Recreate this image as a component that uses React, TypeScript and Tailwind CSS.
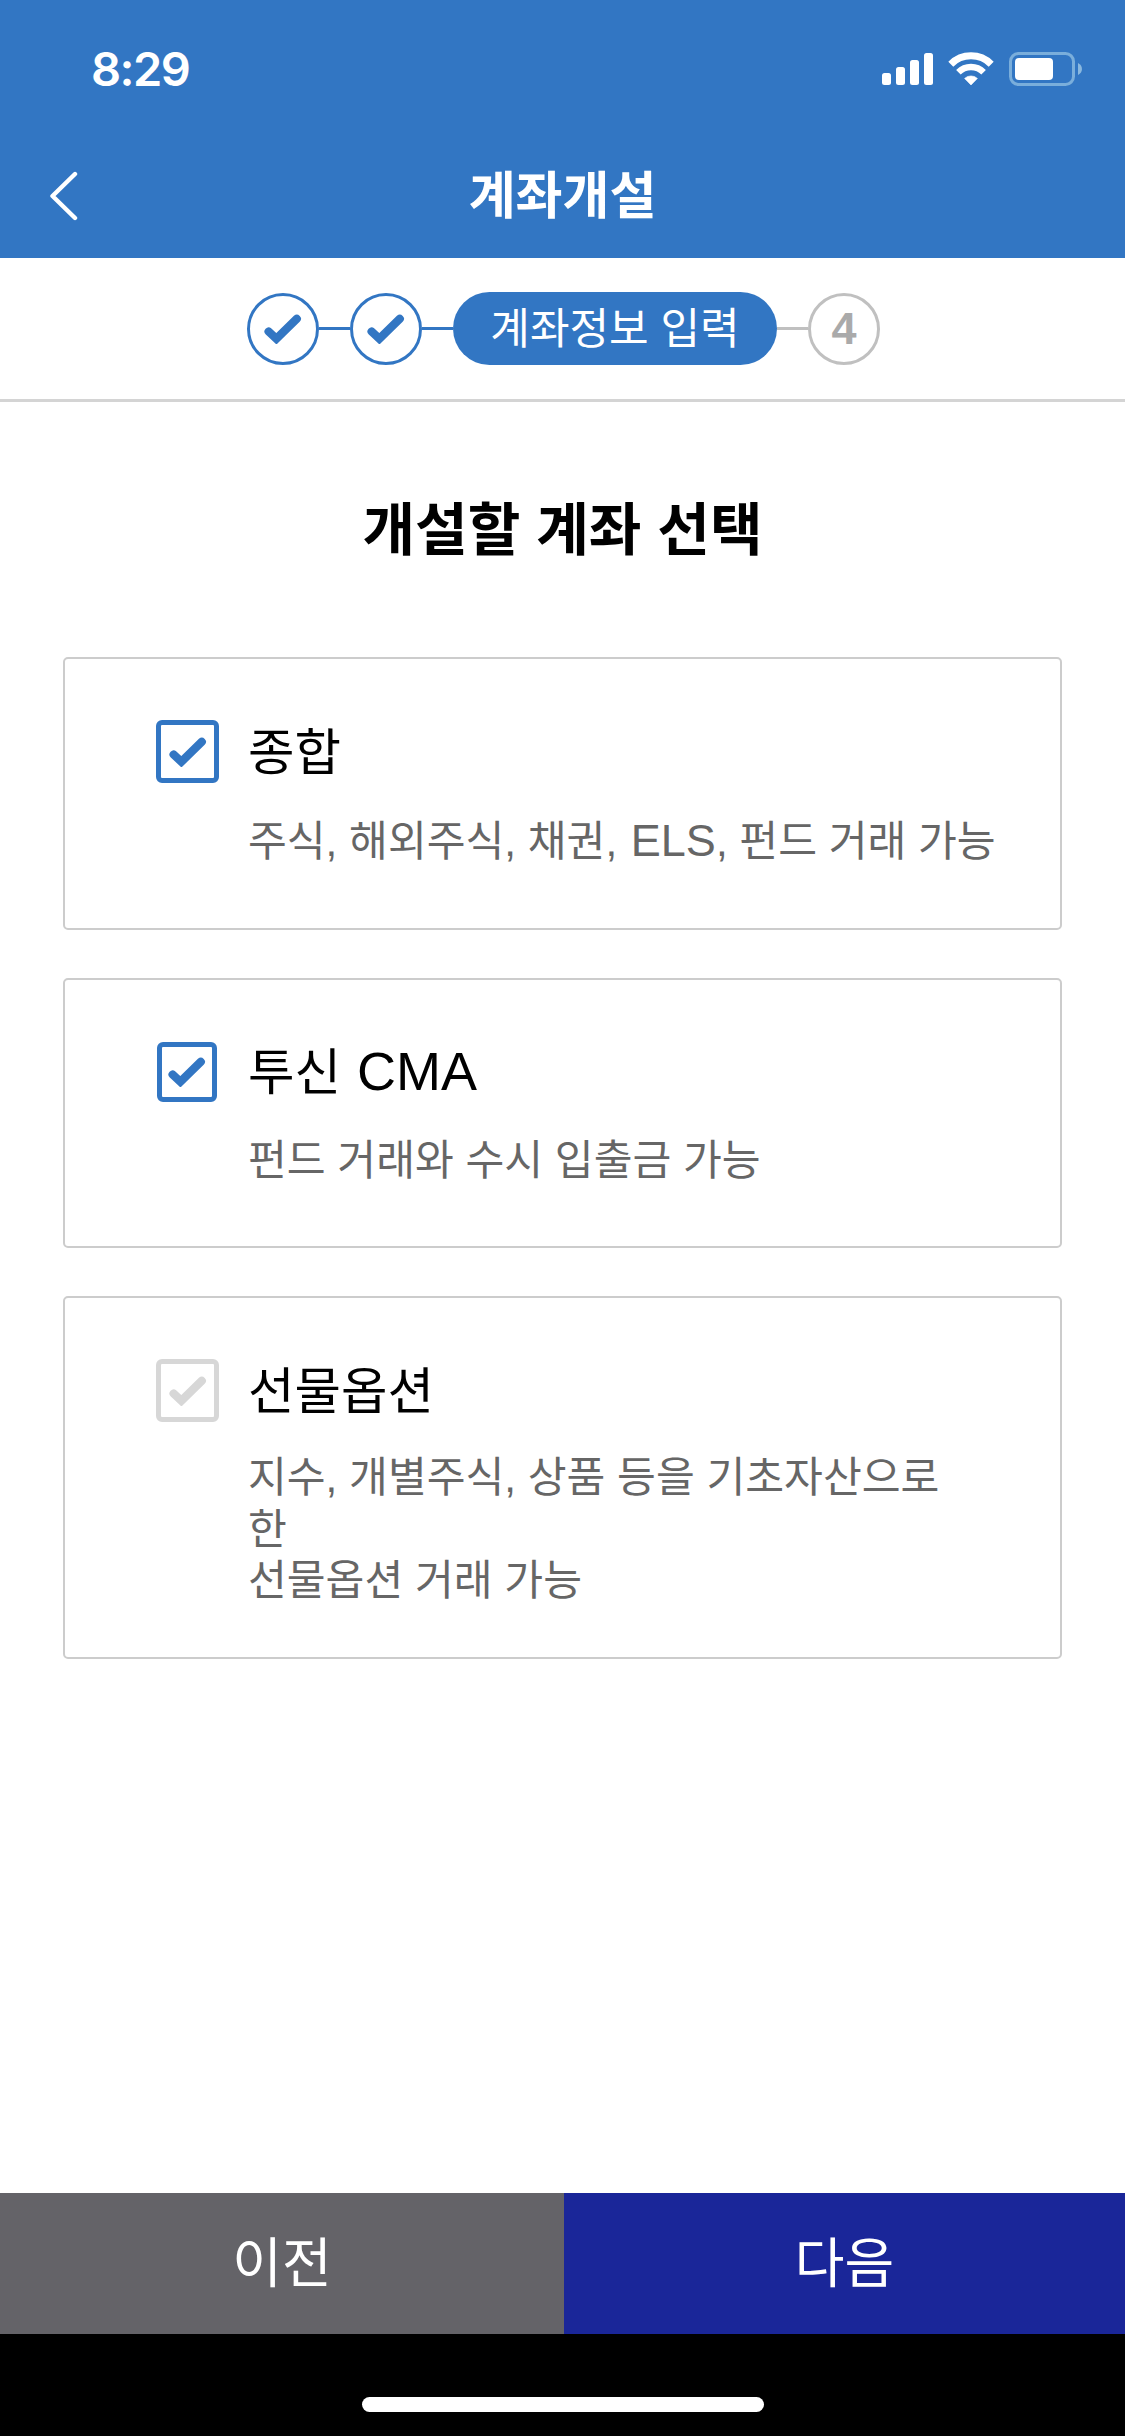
import { ReactNode } from "react";
import clsx from "clsx";

interface Account {
  id: string;
  name: ReactNode;
  desc: ReactNode;
  checked: boolean;
  cardClass: string;
  boxClass: string;
  nameClass?: string;
  descClass: string;
}

const accounts: Account[] = [
  {
    id: "general",
    name: "종합",
    desc: (
      <>
        주식, 해외주식, 채권, <span className="ml-0.5 text-[45px]">ELS</span>, 펀드 거래 가능
      </>
    ),
    checked: true,
    cardClass: "h-[273px]",
    boxClass: "size-[63px]",
    nameClass: "pt-0.5",
    descClass: "mt-[32px]",
  },
  {
    id: "cma",
    name: (
      <>
        투신 <span className="ml-0.5 text-[54px]">CMA</span>
      </>
    ),
    desc: "펀드 거래와 수시 입출금 가능",
    checked: true,
    cardClass: "h-[270px]",
    boxClass: "size-[60px] ml-px mr-0.5",
    descClass: "mt-[32px]",
  },
  {
    id: "futures",
    name: "선물옵션",
    desc: (
      <>
        지수, 개별주식, 상품 등을 기초자산으로
        <br />
        한
        <br />
        선물옵션 거래 가능
      </>
    ),
    checked: false,
    cardClass: "h-[363px]",
    boxClass: "size-[63px]",
    nameClass: "pt-0.5",
    descClass: "mt-[30px]",
  },
];

const CheckMark = ({ className }: { className?: string }) => (
  <svg viewBox="0 0 38 30" className={className} fill="none">
    <path
      d="M4.6 17.5L12.4 24.8L32.8 4.8"
      stroke="currentColor"
      strokeWidth="8.2"
      strokeLinecap="round"
    />
  </svg>
);

const StatusBar = () => (
  <div className="flex h-[135px] items-start justify-between pl-[91px] pr-[43px] pt-[52px] text-white">
    <p className="font-[Inter] text-[47px] font-semibold leading-[34px] tracking-[-1.5px]">8:29</p>
    <div className="flex items-start">
      <svg width="51" height="34" viewBox="0 0 51 34" fill="currentColor">
        <rect x="0" y="21" width="9" height="12" rx="2.5" />
        <rect x="14" y="15" width="9" height="18" rx="2.5" />
        <rect x="28" y="8" width="9" height="25" rx="2.5" />
        <rect x="42" y="1" width="9" height="32" rx="2.5" />
      </svg>
      <svg className="ml-[15px]" width="46" height="34" viewBox="0 0 46 34" fill="none">
        <path d="M2.8 12.2A28.6 28.6 0 0 1 43.2 12.2" stroke="currentColor" strokeWidth="7" />
        <path d="M10.4 20.2A17.8 17.8 0 0 1 35.6 20.2" stroke="currentColor" strokeWidth="6.4" />
        <path
          d="M23 33L16.6 26.4A9.5 9.5 0 0 1 29.4 26.4Z"
          fill="currentColor"
          stroke="currentColor"
          strokeWidth="0.6"
          strokeLinejoin="round"
        />
      </svg>
      <svg className="ml-[15px]" width="73" height="34" viewBox="0 0 73 34" fill="none">
        <rect x="1.5" y="1.5" width="63" height="31" rx="8" stroke="#7aaedb" strokeWidth="3" />
        <rect x="6" y="6" width="38" height="22" rx="4" fill="currentColor" />
        <path d="M69 11C74.3 13.5 74.3 20.5 69 23Z" fill="#8ab8df" />
      </svg>
    </div>
  </div>
);

const StepDone = () => (
  <div className="flex size-[72px] items-center justify-center rounded-full border-[3px] border-[#3276c3] text-[#3276c3]">
    <CheckMark className="w-[38px]" />
  </div>
);

const Stepper = () => (
  <div className="flex h-[144px] items-center justify-center border-b-[3px] border-[#d4d4d4] pl-[2px]">
    <StepDone />
    <div className="h-[3px] w-[31px] bg-[#3276c3]" />
    <StepDone />
    <div className="h-[3px] w-[31px] bg-[#3276c3]" />
    <div className="flex h-[73px] w-[324px] items-center justify-center rounded-full bg-[#3276c3] text-[43px] leading-none text-white">
      <span className="pt-px">계좌정보 입력</span>
    </div>
    <div className="h-[3px] w-[31px] bg-[#c0c0c0]" />
    <div className="flex size-[72px] items-center justify-center rounded-full border-[3px] border-[#c0c0c0] text-[45px] font-bold leading-none text-[#aaaaaa]">
      4
    </div>
  </div>
);

const AccountCard = ({ account }: { account: Account }) => (
  <div
    className={clsx(
      "rounded-[5px] border-2 border-[#cccccc] pl-[91px] pt-[61px]",
      account.cardClass
    )}
  >
    <div className="flex items-center">
      <div
        className={clsx(
          "flex shrink-0 items-center justify-center rounded-md border-[5px]",
          account.checked ? "border-[#3276c3] text-[#3276c3]" : "border-[#d7d7d7] text-[#d7d7d7]",
          account.boxClass
        )}
      >
        <CheckMark className="w-[38px] shrink-0" />
      </div>
      <h2 className={clsx("ml-[29px] text-[50.5px] leading-[60px] text-black", account.nameClass)}>
        {account.name}
      </h2>
    </div>
    <p
      className={clsx(
        "ml-[92px] whitespace-nowrap text-[42.2px] leading-[51.5px] text-[#666666]",
        account.descClass
      )}
    >
      {account.desc}
    </p>
  </div>
);

const App = () => {
  return (
    <div className="flex h-[2436px] w-[1125px] flex-col bg-white font-['Liberation_Sans','Noto_Sans_CJK_KR',sans-serif]">
      <header className="h-[258px] shrink-0 bg-[#3276c3]">
        <StatusBar />
        <div className="grid h-[121px] grid-cols-3 items-center text-white">
          <svg className="ml-[49px]" width="30" height="50" viewBox="0 0 30 50" fill="none">
            <path
              d="M26 3L3.5 25L26 47"
              stroke="currentColor"
              strokeWidth="4.4"
              strokeLinecap="round"
              strokeLinejoin="round"
            />
          </svg>
          <h1 className="pt-0.5 text-center text-[51px] font-bold leading-none">계좌개설</h1>
        </div>
      </header>

      <Stepper />

      <main className="flex-1 px-[63px]">
        <p className="mt-[93px] text-center text-[57.2px] font-bold leading-[70px] text-black">
          개설할 계좌 선택
        </p>
        <div className="mt-[92px] flex flex-col gap-12">
          {accounts.map((account) => (
            <AccountCard key={account.id} account={account} />
          ))}
        </div>
      </main>

      <div className="flex h-[141px] shrink-0 text-[54px] leading-none text-white">
        <button className="w-[564px] bg-[#646368]">이전</button>
        <button className="flex-1 bg-[#1a2699]">다음</button>
      </div>
      <div className="flex h-[102px] shrink-0 justify-center bg-black pt-[63px]">
        <div className="h-[15px] w-[402px] rounded-full bg-white" />
      </div>
    </div>
  );
};

export default App;
